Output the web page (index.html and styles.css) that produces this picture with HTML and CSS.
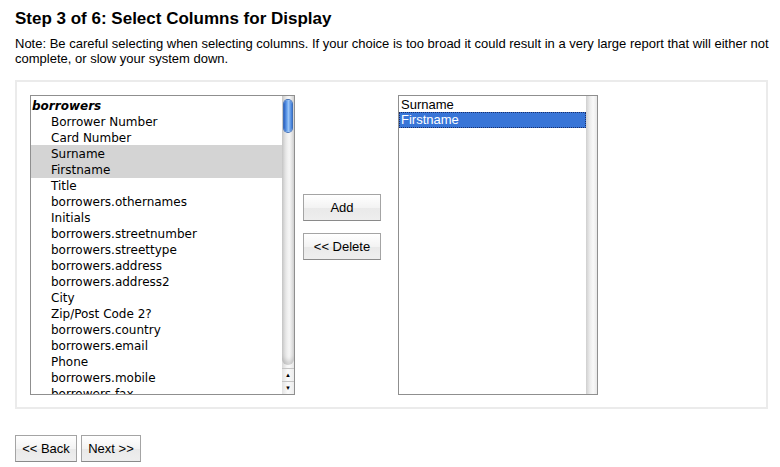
FILE: index.html
```html
<!DOCTYPE html>
<html>
<head>
<meta charset="utf-8">
<title>Step 3 of 6</title>
<link rel="stylesheet" href="styles.css">
</head>
<body>
<h1 class="title">Step 3 of 6: Select Columns for Display</h1>
<p class="note">Note: Be careful selecting when selecting columns. If your choice is too broad it could result in a very large report that will either not complete, or slow your system down.</p>
<div class="panel">
  <div class="listbox left">
    <div class="items">
      <div class="group">borrowers</div>
      <div class="opt">Borrower Number</div>
      <div class="opt">Card Number</div>
      <div class="opt hl">Surname</div>
      <div class="opt hl">Firstname</div>
      <div class="opt">Title</div>
      <div class="opt">borrowers.othernames</div>
      <div class="opt">Initials</div>
      <div class="opt">borrowers.streetnumber</div>
      <div class="opt">borrowers.streettype</div>
      <div class="opt">borrowers.address</div>
      <div class="opt">borrowers.address2</div>
      <div class="opt">City</div>
      <div class="opt">Zip/Post Code 2?</div>
      <div class="opt">borrowers.country</div>
      <div class="opt">borrowers.email</div>
      <div class="opt">Phone</div>
      <div class="opt">borrowers.mobile</div>
      <div class="opt">borrowers.fax</div>
    </div>
    <div class="scrollbar">
      <div class="track"><div class="thumb"></div></div>
      <div class="arrow">&#9650;</div>
      <div class="arrow">&#9660;</div>
    </div>
  </div>
  <div class="actions">
    <button class="btn mid">Add</button>
    <button class="btn mid">&lt;&lt; Delete</button>
  </div>
  <div class="listbox right">
    <div class="items plain">
      <div class="ropt">Surname</div>
      <div class="ropt sel">Firstname</div>
    </div>
    <div class="gutter"></div>
  </div>
</div>
<div class="nav">
  <button class="btn back">&lt;&lt; Back</button>
  <button class="btn next">Next &gt;&gt;</button>
</div>
</body>
</html>
```
FILE: styles.css
```css
html, body {
  margin: 0;
  background: #fff;
}
body {
  padding: 9px 4px 0 15px;
  font-family: "Liberation Sans", Arial, sans-serif;
  color: #000;
}
.title {
  margin: 0;
  font-size: 17px;
  line-height: 20px;
  font-weight: bold;
}
.note {
  margin: 7px 0 0;
  font-size: 13px;
  line-height: 15px;
}
.panel {
  margin-top: 14px;
  width: 723px;
  border: 2px solid #ebebeb;
  padding: 13px 13px 12px 13px;
  display: flex;
  align-items: flex-start;
}
.listbox {
  height: 298px;
  border: 1px solid #8f8f8f;
  display: flex;
  overflow: hidden;
  background: #fff;
}
.left {
  width: 263px;
}
.right {
  width: 198px;
  margin-left: 17px;
}
.items {
  flex: 1;
  padding-top: 1px;
  overflow: hidden;
  font-family: "DejaVu Sans", sans-serif;
  font-size: 12px;
  line-height: 16px;
}
.group,
.opt {
  padding-top: 1px;
  margin-bottom: -1px;
}
.group {
  font-weight: bold;
  font-style: italic;
  padding-left: 1px;
}
.opt {
  padding-left: 20px;
  white-space: nowrap;
}
.opt.hl {
  background: #d4d4d4;
}
.scrollbar {
  width: 12px;
  display: flex;
  flex-direction: column;
  background: linear-gradient(to right, #d8d8d8, #f4f4f4 40%, #fafafa 60%, #e6e6e6);
}
.track {
  flex: 1;
  position: relative;
  border-bottom-left-radius: 6px;
  border-bottom-right-radius: 6px;
  background: linear-gradient(to right, #d2d2d2, #efefef 45%, #f6f6f6 60%, #dedede);
  box-shadow: inset 0 -4px 4px rgba(0,0,0,0.14);
  margin-bottom: 3px;
}
.thumb {
  position: absolute;
  left: 2px;
  top: 4px;
  width: 8px;
  height: 32px;
  border-radius: 4px;
  background: linear-gradient(to right, #2a62c4, #6fa8f0 40%, #9cc6f6 55%, #3b7ad8);
  box-shadow: 0 0 0 1px #3f6fb8;
}
.arrow {
  height: 12px;
  font-size: 6px;
  line-height: 12px;
  text-align: center;
  color: #000;
  border-top: 1px solid #c4c4c4;
  background: linear-gradient(to right, #e2e2e2, #fbfbfb 50%, #ececec);
}
.actions {
  margin-left: 8px;
  margin-top: 99px;
  display: flex;
  flex-direction: column;
  gap: 12px;
}
.btn {
  font-family: "Liberation Sans", Arial, sans-serif;
  font-size: 13px;
  color: #000;
  border: 1px solid #a4a4a4;
  border-bottom-color: #8a8a8a;
  background: linear-gradient(to bottom, #ffffff, #f3f3f3 50%, #e9e9e9 51%, #eeeeee);
  padding: 0;
  margin: 0;
  border-radius: 0;
}
.mid {
  width: 78px;
  height: 27px;
}
.plain {
  font-family: "Liberation Sans", Arial, sans-serif;
  font-size: 13px;
  line-height: 15px;
}
.ropt {
  padding-left: 2px;
  white-space: nowrap;
}
.ropt.sel {
  background: #3875d7;
  color: #fff;
  outline: 1px dotted #1a2f6a;
  outline-offset: -1px;
  line-height: 16px;
}
.gutter {
  width: 11px;
  background: linear-gradient(to right, #cfcfcf, #ececec 35%, #f9f9f9 65%, #e8e8e8);
}
.nav {
  margin-top: 26px;
  display: flex;
  gap: 4px;
}
.back {
  width: 62px;
  height: 27px;
}
.next {
  width: 60px;
  height: 27px;
}
```
